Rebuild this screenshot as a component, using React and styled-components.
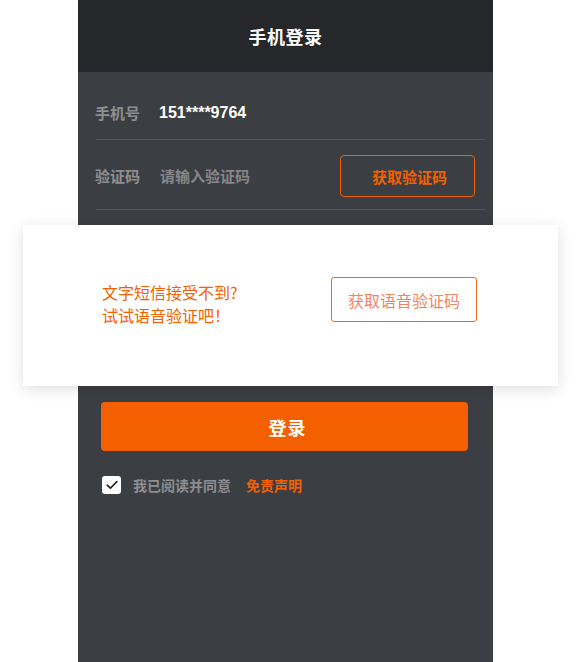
import React from 'react';
import styled, { createGlobalStyle } from 'styled-components';

const GlobalStyle = createGlobalStyle`
  html, body {
    margin: 0;
    padding: 0;
    background: #ffffff;
  }
  body {
    font-family: "Noto Sans CJK SC", "Noto Sans", sans-serif;
  }
`;

const ORANGE = '#f46000';

const Page = styled.div`
  position: relative;
  width: 581px;
  height: 662px;
  overflow: hidden;
`;

const Panel = styled.div`
  margin-left: 78px;
  width: 415px;
  height: 662px;
  background: #3b3e43;
  display: flex;
  flex-direction: column;
`;

const Header = styled.header`
  height: 72px;
  flex-shrink: 0;
  background: #25272b;
  display: flex;
  align-items: center;
  justify-content: center;
  color: #ffffff;
  font-size: 18px;
  font-weight: 700;
  letter-spacing: 0.5px;
`;

const Form = styled.div`
  padding: 0 8px 0 17px;
`;

const Row = styled.div`
  display: flex;
  align-items: center;
  padding: ${({ $pad }) => $pad};
  border-bottom: 1px solid #54575c;
  margin-left: 1px;
`;

const Label = styled.span`
  width: 64px;
  margin-left: -1px;
  color: #8e8f91;
  font-size: 15px;
  font-weight: 700;
  line-height: 22px;
`;

const Value = styled.span`
  color: #ffffff;
  font-family: "Liberation Sans", Arial, sans-serif;
  font-size: 16px;
  font-weight: 700;
  line-height: 22px;
`;

const Placeholder = styled.span`
  margin-left: 1px;
  color: #86878a;
  font-size: 15px;
  font-weight: 700;
  line-height: 22px;
`;

const CodeButton = styled.button`
  margin-left: auto;
  margin-right: 10px;
  width: 135px;
  height: 42px;
  box-sizing: border-box;
  border: 1px solid ${ORANGE};
  border-radius: 4px;
  background: transparent;
  color: ${ORANGE};
  font-family: inherit;
  font-size: 15px;
  font-weight: 700;
  padding: 0 0 0 4px;
`;

const Actions = styled.div`
  padding: 192px 25px 0 23px;
`;

const LoginButton = styled.button`
  display: block;
  width: 100%;
  height: 49px;
  border: none;
  border-radius: 4px;
  background: ${ORANGE};
  color: #ffffff;
  font-family: inherit;
  font-size: 18px;
  font-weight: 700;
  letter-spacing: 1px;
  padding: 0 0 0 6px;
`;

const Agree = styled.div`
  display: flex;
  align-items: center;
  margin-top: 25px;
  font-size: 14px;
  font-weight: 700;
  line-height: 18px;
`;

const CheckBox = styled.span`
  width: 19px;
  height: 18px;
  margin-left: 1px;
  border-radius: 3px;
  background: #ffffff;
  display: flex;
  align-items: center;
  justify-content: center;
`;

const AgreeText = styled.span`
  margin-left: 12px;
  margin-top: -1px;
  color: #8d8e90;
`;

const AgreeLink = styled.span`
  margin-left: 15px;
  margin-top: -1px;
  color: ${ORANGE};
`;

const VoiceCard = styled.div`
  position: absolute;
  left: 23px;
  top: 225px;
  width: 535px;
  height: 161px;
  box-sizing: border-box;
  background: #ffffff;
  box-shadow: 0 3px 14px rgba(0, 0, 0, 0.13);
  display: flex;
  align-items: center;
  padding: 0 81px 12px 79px;
`;

const Hint = styled.div`
  margin-top: 8px;
  color: ${ORANGE};
  font-size: 16px;
  line-height: 23px;
`;

const VoiceButton = styled.button`
  margin-left: auto;
  width: 146px;
  height: 45px;
  box-sizing: border-box;
  border: 1px solid #ee6a1c;
  border-radius: 3px;
  background: #ffffff;
  color: #f2845e;
  font-family: inherit;
  font-size: 16px;
  padding: 0;
`;

const Check = () => (
  <svg width="12" height="10" viewBox="0 0 12 10" fill="none">
    <path d="M1.2 5.2 L4.4 8.2 L10.8 1.6" stroke="#1f2023" strokeWidth="1.6" strokeLinecap="round" strokeLinejoin="round" />
  </svg>
);

export default function App() {
  return (
    <Page>
      <GlobalStyle />
      <Panel>
        <Header>手机登录</Header>
        <Form>
          <Row $pad="30px 0 15px">
            <Label>手机号</Label>
            <Value>151****9764</Value>
          </Row>
          <Row $pad="15px 0 12px">
            <Label>验证码</Label>
            <Placeholder>请输入验证码</Placeholder>
            <CodeButton>获取验证码</CodeButton>
          </Row>
        </Form>
        <Actions>
          <LoginButton>登录</LoginButton>
          <Agree>
            <CheckBox>
              <Check />
            </CheckBox>
            <AgreeText>我已阅读并同意</AgreeText>
            <AgreeLink>免责声明</AgreeLink>
          </Agree>
        </Actions>
      </Panel>
      <VoiceCard>
        <Hint>
          文字短信接受不到?
          <br />
          试试语音验证吧！
        </Hint>
        <VoiceButton>获取语音验证码</VoiceButton>
      </VoiceCard>
    </Page>
  );
}
